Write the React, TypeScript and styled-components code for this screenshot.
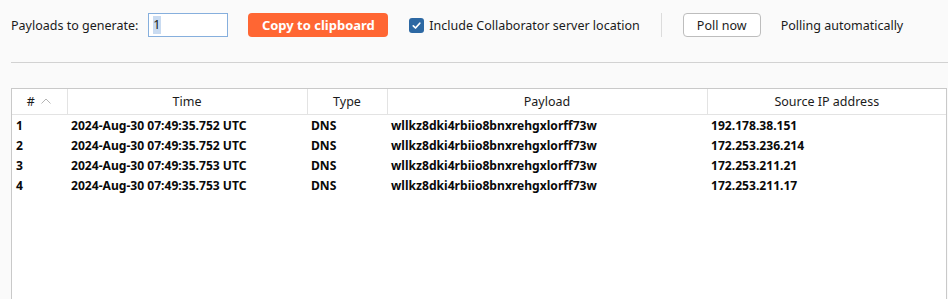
import React from 'react'
import styled, { createGlobalStyle } from 'styled-components'

const GlobalStyle = createGlobalStyle`
  html, body {
    margin: 0;
    padding: 0;
    background: #fafafa;
    font-family: 'Noto Sans', 'Open Sans', sans-serif;
    font-size: 12.5px;
    color: #1b1b1b;
    overflow: hidden;
  }
`

const Page = styled.div`
  height: 299px;
  padding: 13px 0 0 11px;
  box-sizing: border-box;
  display: flex;
  flex-direction: column;
`

const Toolbar = styled.div`
  display: flex;
  align-items: center;
  height: 24px;
`

const Label = styled.span<{ gap?: number }>`
  margin-right: ${(p) => p.gap ?? 0}px;
  white-space: nowrap;
`

const CountInput = styled.div`
  width: 80px;
  height: 24px;
  box-sizing: border-box;
  border: 1px solid #86afdd;
  background: white;
  display: flex;
  align-items: center;
  padding-left: 4px;
  margin-right: 20px;
`

const Selected = styled.span`
  background: #c9dbf1;
  padding: 1px 0;
  line-height: 16px;
`

const PrimaryButton = styled.button`
  width: 140px;
  height: 24px;
  border: none;
  border-radius: 4px;
  background: #ff6633;
  color: white;
  font-family: inherit;
  font-size: 13px;
  font-weight: bold;
  padding: 0;
  margin-right: 21px;
`

const CheckRow = styled.label`
  display: flex;
  align-items: center;
  gap: 5px;
  margin-right: 21px;
`

const CheckBox = styled.span`
  width: 15px;
  height: 15px;
  border-radius: 3px;
  background: #2c68a3;
  display: flex;
  align-items: center;
  justify-content: center;
`

const Separator = styled.div`
  width: 1px;
  height: 24px;
  background: #dcdcdc;
  margin-right: 21px;
`

const SecondaryButton = styled.button`
  width: 78px;
  height: 24px;
  box-sizing: border-box;
  border: 1px solid #bdbdbd;
  border-radius: 4px;
  background: white;
  color: #1b1b1b;
  font-family: inherit;
  font-size: 12.5px;
  padding: 0;
  margin-right: 20px;
`

const Divider = styled.div`
  height: 1px;
  background: #d2d2d2;
  margin-top: 25px;
`

const TableBox = styled.div`
  margin-top: 25px;
  margin-right: 1px;
  flex: 1;
  border: 1px solid #c9c9c9;
  border-bottom: none;
  background: white;
`

const Table = styled.table`
  width: 100%;
  border-collapse: collapse;
  table-layout: fixed;
`

const HeadCell = styled.th`
  height: 25px;
  padding: 0;
  font-weight: normal;
  text-align: center;
  border-right: 1px solid #e3e3e3;
  border-bottom: 1px solid #e3e3e3;
  &:last-child {
    border-right: none;
  }
`

const Cell = styled.td`
  height: 20px;
  padding: 0 0 0 4px;
  font-weight: bold;
  font-size: 12.1px;
  color: #0a0a0a;
  white-space: nowrap;
  overflow: hidden;
`

const SortArrow = () => (
  <svg width="12" height="8" viewBox="0 0 12 8" style={{ marginLeft: 5, verticalAlign: 1 }}>
    <path d="M1.5 6.5 L6 2 L10.5 6.5" fill="none" stroke="#b5b5b5" strokeWidth="1" />
  </svg>
)

const Check = () => (
  <svg width="11" height="11" viewBox="0 0 11 11">
    <path d="M2.3 5.8 L4.5 8 L8.8 3.2" fill="none" stroke="white" strokeWidth="1.7" strokeLinecap="round" strokeLinejoin="round" />
  </svg>
)

const columns = [55, 240, 80, 320]

const rows = [
  ['1', '2024-Aug-30 07:49:35.752 UTC', 'DNS', 'wllkz8dki4rbiio8bnxrehgxlorff73w', '192.178.38.151'],
  ['2', '2024-Aug-30 07:49:35.752 UTC', 'DNS', 'wllkz8dki4rbiio8bnxrehgxlorff73w', '172.253.236.214'],
  ['3', '2024-Aug-30 07:49:35.753 UTC', 'DNS', 'wllkz8dki4rbiio8bnxrehgxlorff73w', '172.253.211.21'],
  ['4', '2024-Aug-30 07:49:35.753 UTC', 'DNS', 'wllkz8dki4rbiio8bnxrehgxlorff73w', '172.253.211.17'],
]

const App = () => (
  <>
    <GlobalStyle />
    <Page>
      <Toolbar>
        <Label gap={10}>Payloads to generate:</Label>
        <CountInput>
          <Selected>1</Selected>
        </CountInput>
        <PrimaryButton>Copy to clipboard</PrimaryButton>
        <CheckRow>
          <CheckBox>
            <Check />
          </CheckBox>
          Include Collaborator server location
        </CheckRow>
        <Separator />
        <SecondaryButton>Poll now</SecondaryButton>
        <Label>Polling automatically</Label>
      </Toolbar>
      <Divider />
      <TableBox>
        <Table>
          <colgroup>
            {columns.map((w, i) => (
              <col key={i} style={{ width: w }} />
            ))}
            <col />
          </colgroup>
          <thead>
            <tr>
              <HeadCell>
                #<SortArrow />
              </HeadCell>
              <HeadCell>Time</HeadCell>
              <HeadCell>Type</HeadCell>
              <HeadCell>Payload</HeadCell>
              <HeadCell>Source IP address</HeadCell>
            </tr>
          </thead>
          <tbody>
            {rows.map((r) => (
              <tr key={r[0]}>
                {r.map((c, i) => (
                  <Cell key={i}>{c}</Cell>
                ))}
              </tr>
            ))}
          </tbody>
        </Table>
      </TableBox>
    </Page>
  </>
)

export default App
